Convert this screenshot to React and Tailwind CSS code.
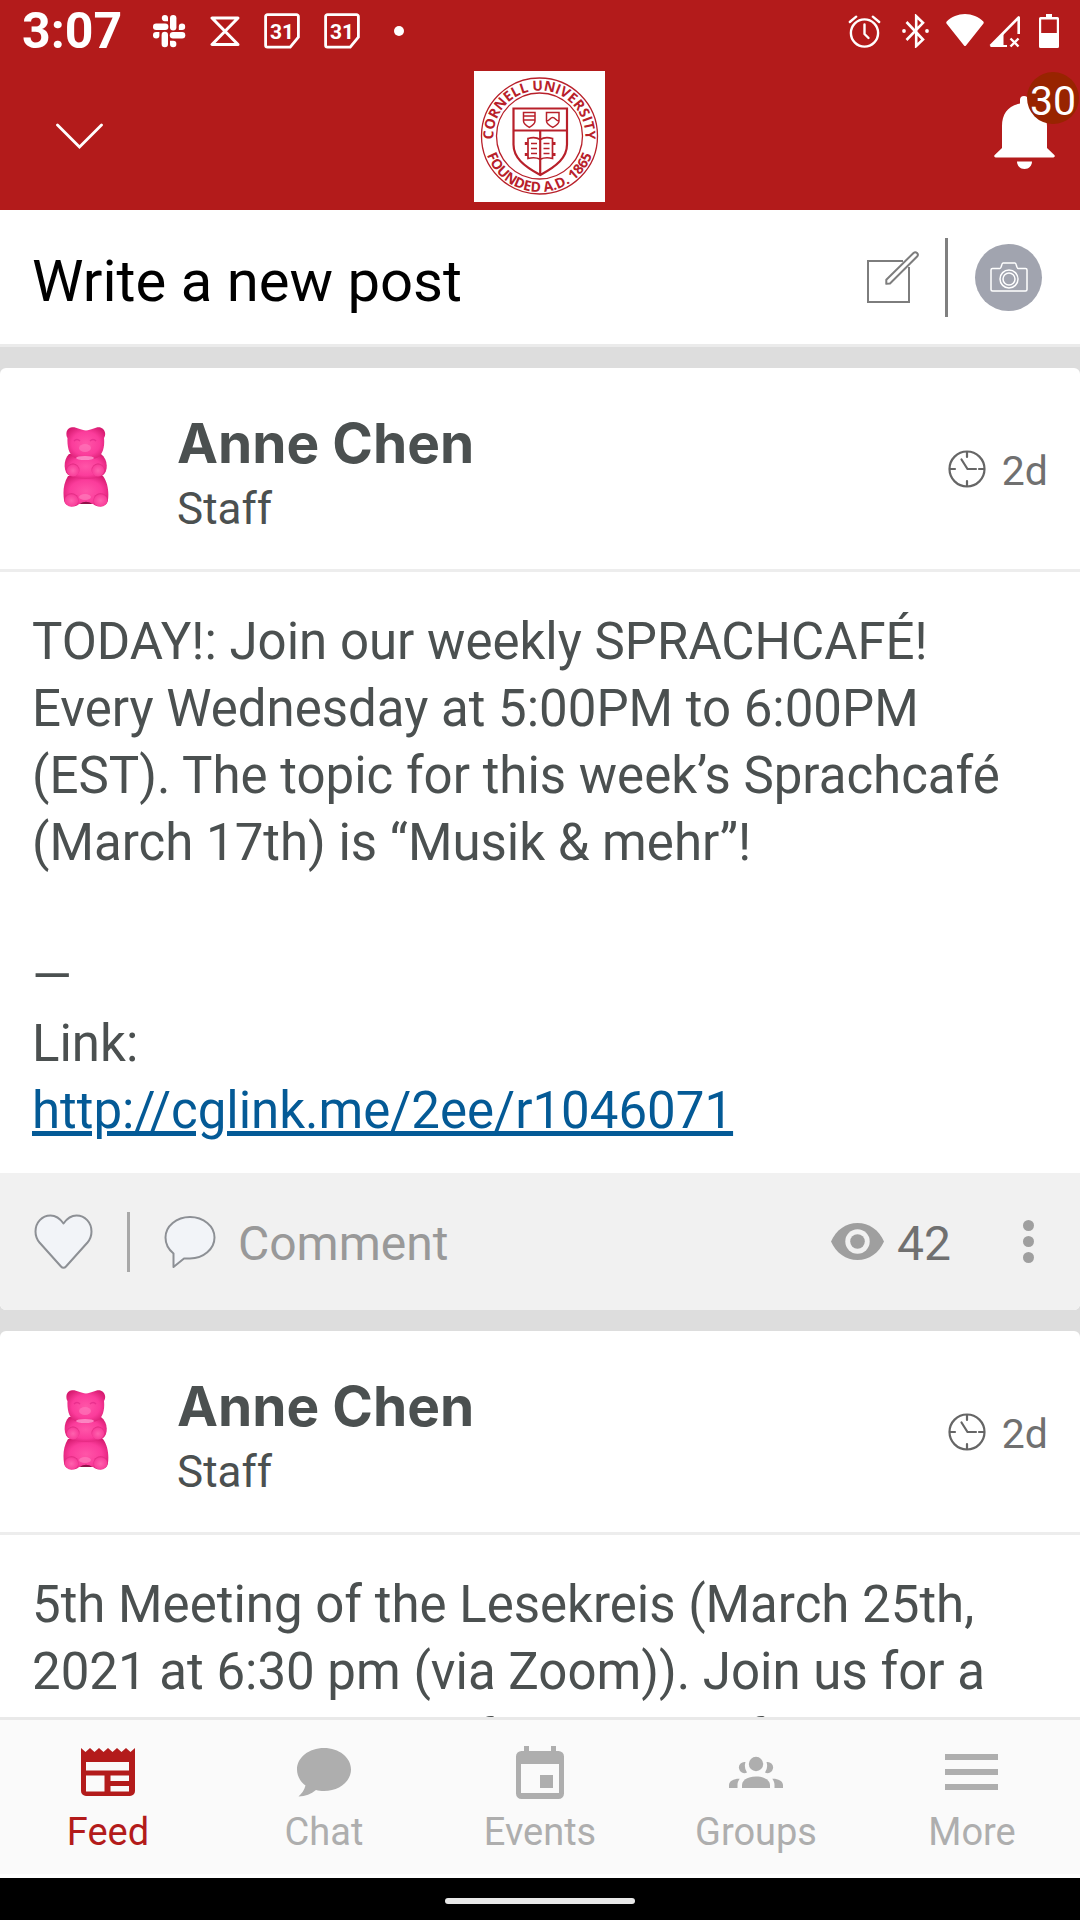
import React from "react";

function SlackIcon() {
  return (
    <svg className="h-[34px] w-[34px]" viewBox="0 0 34 34" fill="#fff" aria-hidden="true">
      <rect x="18" y="1" width="6.4" height="15.5" rx="3.2" />
      <rect x="1" y="9.6" width="15.4" height="6.4" rx="3.2" />
      <rect x="9.6" y="17.8" width="6.4" height="15.5" rx="3.2" />
      <rect x="17.8" y="18" width="15.5" height="6.4" rx="3.2" />
      <path d="M16 7.2h-3.2A3.1 3.1 0 1 1 16 4.1Z" />
      <path d="M26.8 16v-3.2a3.2 3.2 0 1 1 3.2 3.2Z" />
      <path d="M7.4 18v3.2a3.2 3.2 0 1 1-3.2-3.2Z" />
      <path d="M18 26.8h3.2a3.2 3.2 0 1 1-3.2 3.2Z" />
    </svg>
  );
}

function HourglassIcon() {
  return (
    <svg className="h-[34px] w-[30px]" viewBox="0 0 30 34" fill="none" stroke="#fff" strokeWidth="3" strokeLinejoin="round" aria-hidden="true">
      <path d="M2 4h26L2 30.5h26Z" />
    </svg>
  );
}

function CalendarDayIcon() {
  return (
    <svg className="h-[36px] w-[36px]" viewBox="0 0 36 36" fill="none" aria-hidden="true">
      <path d="M3.5 1.7h29a1.9 1.9 0 0 1 1.9 1.9v20.6L26.2 34.2H3.5a1.9 1.9 0 0 1-1.9-1.9V3.6a1.9 1.9 0 0 1 1.9-1.9Z" stroke="#fff" strokeWidth="2.8" strokeLinejoin="round" />
      <text x="18" y="25.5" textAnchor="middle" fill="#fff" fontFamily="Roboto, sans-serif" fontWeight="700" fontSize="21">31</text>
    </svg>
  );
}

function AlarmIcon() {
  return (
    <svg className="h-[34px] w-[33px]" viewBox="0 0 33 34" fill="none" stroke="#fff" strokeWidth="2.4" strokeLinecap="round" strokeLinejoin="round" aria-hidden="true">
      <circle cx="16.5" cy="19" r="13.6" />
      <path d="M16.5 10.5V20l4 4M1.8 8l6.4-5.3M31.2 8l-6.4-5.3" />
    </svg>
  );
}

function BluetoothIcon() {
  return (
    <svg className="h-[34px] w-[27px]" viewBox="0 0 27 34" fill="none" stroke="#fff" strokeWidth="2.6" aria-hidden="true">
      <path d="M4.5 8 21 25.5 14.2 32V2.2L21 8.8 4.5 26" />
      <circle cx="2" cy="17" r="1.9" fill="#fff" stroke="none" />
      <circle cx="25" cy="17" r="1.9" fill="#fff" stroke="none" />
    </svg>
  );
}

function WifiIcon() {
  return (
    <svg className="h-[34px] w-[38px]" viewBox="0 0 38 34" fill="#fff" aria-hidden="true">
      <path d="M19 0c7 0 13.500 2.800 18.300 7.500.6.700.6 1.600 0 2.300L20 31.500c-.6.7-1.400.7-2 0L.7 9.800c-.6-.7-.6-1.600 0-2.300C5.500 2.800 12 0 19 0Z" />
    </svg>
  );
}

function SignalIcon() {
  return (
    <svg className="h-[34px] w-[32px]" viewBox="0 0 32 34" aria-hidden="true">
      <path d="M1.5 32 29.700 3.500V20" fill="none" stroke="#fff" strokeWidth="2.6" strokeLinejoin="round" />
      <path d="M1 33 14.500 19V31H18v2Z" fill="#fff" />
      <path d="m21.500 24.500 8 8m0-8-8 8" stroke="#fff" strokeWidth="2.4" fill="none" />
    </svg>
  );
}

function BatteryIcon() {
  return (
    <svg className="h-[35px] w-[20px]" viewBox="0 0 20 35" aria-hidden="true">
      <path d="M7 0h6v3h5.500A1.500 1.500 0 0 1 20 4.500v28a1.500 1.500 0 0 1-1.500 1.500h-17A1.500 1.500 0 0 1 0 32.500v-28A1.500 1.500 0 0 1 1.500 3H7Zm-4.800 5.500V19h15.600V5.500Z" fill="#fff" fillRule="evenodd" />
    </svg>
  );
}

function StatusBar() {
  return (
    <div className="flex h-[62px] shrink-0 items-center justify-between pl-[22px] pr-[21px]">
      <div className="flex items-center gap-[24px]">
        <time className="mr-[6px] text-[50px] leading-[62px] font-bold text-white">3:07</time>
        <SlackIcon />
        <HourglassIcon />
        <CalendarDayIcon />
        <CalendarDayIcon />
        <span className="ml-[10px] size-[10px] rounded-full bg-white" />
      </div>
      <div className="flex items-center">
        <AlarmIcon />
        <span className="w-[21px]" />
        <BluetoothIcon />
        <span className="w-[17px]" />
        <WifiIcon />
        <span className="w-[5px]" />
        <SignalIcon />
        <span className="w-[18px]" />
        <BatteryIcon />
      </div>
    </div>
  );
}

function CornellSeal() {
  return (
    <svg className="size-[131px] bg-white" viewBox="0 0 131 131" fill="none" stroke="#b8202a" role="img" aria-label="Cornell University">
      <defs>
        <path id="seal-top" d="M20.5 75A46 46 0 1 1 110.5 75" />
        <path id="seal-bottom" d="M9.500 65A56 56 0 0 0 121.500 65" />
      </defs>
      <circle cx="65.5" cy="65" r="58" strokeWidth="1.3" />
      <circle cx="65.5" cy="65" r="43" strokeWidth="1.3" />
      <g fill="#b8202a" stroke="none" fontFamily="'Open Sans', sans-serif" fontWeight="700" fontSize="14" textAnchor="middle">
        <text><textPath href="#seal-top" startOffset="50%">CORNELL UNIVERSITY</textPath></text>
        <text><textPath href="#seal-bottom" startOffset="50%">FOUNDED A.D. 1865</textPath></text>
      </g>
      <path d="M39.5 37.5h53.5v36c0 13-10 21.500-26.700 30.500C49.500 95 39.500 86.500 39.500 73.500ZM39.500 59.500H93M66.200 59.500V104" strokeWidth="2.2" />
      <path d="M49.500 41.500h11.500v8.500c0 3-2.500 4.600-5.700 6.300-3.300-1.700-5.800-3.300-5.800-6.300ZM49.500 45h11.500M49.500 49h11.500" strokeWidth="1.500" />
      <path d="M72.500 41.500h12.500v8.500c0 3-2.800 4.600-6.200 6.300-3.500-1.700-6.300-3.300-6.300-6.300ZM72.500 50c3 0 3.500-3.500 6.200-3.500S82 50 85 50" strokeWidth="1.500" />
      <path d="M54 67.500c5-1.500 9-1 12.200 1 3.200-2 7.300-2.500 12.300-1v20c-5-1.300-9-.8-12.300.8-3.200-1.600-7.200-2.100-12.200-.8Z" strokeWidth="1.700" />
      <path d="M57 72.500h6M57 77.500h6M57 82.500h6M69.500 72.500h6M69.500 77.500h6M69.500 82.500h6" strokeWidth="1.600" />
      <path d="M50.800 72.500h3M50.800 83.500h3M78.500 72.500h3M78.500 83.500h3" strokeWidth="2.800" />
    </svg>
  );
}

function AppHeader() {
  return (
    <header className="shrink-0 bg-[#b31b1b]">
      <StatusBar />
      <div className="grid h-[148px] grid-cols-[1fr_auto_1fr] items-center pl-[56px] pr-[25px]">
        <button type="button" aria-label="Collapse" className="justify-self-start">
          <svg className="h-[26px] w-[48px]" viewBox="0 0 48 26" fill="none" stroke="#fff" strokeWidth="2.8" strokeLinecap="round" aria-hidden="true">
            <path d="M1.500 2 23.500 24 45.500 2" />
          </svg>
        </button>
        <div className="-ml-8">
          <CornellSeal />
        </div>
        <button type="button" aria-label="30 notifications" className="relative justify-self-end pb-2">
          <svg className="h-[73px] w-[61px]" viewBox="0 0 61 73" fill="#fff" aria-hidden="true">
            <path d="M26 4a4 4 0 0 1 8 0v3.500C46 9.500 53 18 53 30v22l7.300 7c1 1 .4 2.500-1 2.500H1.700c-1.400 0-2-1.500-1-2.500L8 52V30C8 18 14 9.500 26 7.500Z" />
            <path d="M23 65.500h15c0 4-3 7.500-7.500 7.500S23 69.500 23 65.500Z" />
          </svg>
          <span className="absolute -top-[24px] -right-[24px] flex size-[52px] items-center justify-center rounded-full bg-[#982400] pt-2 text-[41px] leading-none text-white">
            30
          </span>
        </button>
      </div>
    </header>
  );
}

function Composer() {
  return (
    <section className="flex h-[137px] items-center border-b-[3px] border-[#ebebeb] bg-white pl-[32px] pr-[38px]">
      <button type="button" className="flex-1 pt-2 text-left text-[58px] leading-[68px] text-black">Write a new post</button>
      <button type="button" aria-label="Compose">
        <svg className="h-[52px] w-[54px]" viewBox="0 0 54 52" fill="none" stroke="#7d7d7d" strokeWidth="2" aria-hidden="true">
          <path d="M37 10H2v41h41V16" />
          <path d="M20.300 32.800v-4L47.500 2c2.400-2.100 5.800 1 3.600 3.500L24 32.500Z" strokeLinejoin="round" fill="#fff" />
        </svg>
      </button>
      <span className="mr-[27px] ml-[25px] h-[79px] w-[3px] bg-[#808080]" />
      <button type="button" aria-label="Add photo" className="flex size-[67px] items-center justify-center rounded-full bg-[#a1a4af]">
        <svg className="h-[30px] w-[38px]" viewBox="0 0 38 30" fill="none" stroke="#fff" strokeWidth="1.500" strokeLinejoin="round" aria-hidden="true">
          <path d="M2.500 6.500H10c1.500 0 1.500-5.500 3-5.500h12c1.500 0 1.500 5.500 3 5.500h7.500c.8 0 1.500.7 1.500 1.500v19.500c0 .8-.7 1.500-1.500 1.500h-33c-.8 0-1.500-.7-1.500-1.500V8c0-.8.7-1.500 1.500-1.500Z" />
          <circle cx="19" cy="17" r="9" />
          <circle cx="19" cy="17" r="6" />
        </svg>
      </button>
    </section>
  );
}

function GummyBear({ id }) {
  const body = `bear-body-${id}`;
  const limb = `bear-limb-${id}`;
  return (
    <svg className="h-[80px] w-[46px]" viewBox="0 0 46 80" role="img" aria-label="Anne Chen">
      <defs>
        <radialGradient id={body} cx="50%" cy="50%" r="60%">
          <stop offset="0" stopColor="#ff55a8" />
          <stop offset="0.6" stopColor="#fb3c9b" />
          <stop offset="1" stopColor="#d61a6f" />
        </radialGradient>
        <radialGradient id={limb} cx="50%" cy="55%" r="60%">
          <stop offset="0" stopColor="#ff62ae" />
          <stop offset="0.7" stopColor="#f9409b" />
          <stop offset="1" stopColor="#cf1a6e" />
        </radialGradient>
      </defs>
      <path d="M5 49C0 57 0 66 1 73c1 7 12 8 15 4h14c4 4 14 3 15-4 1-8 0-17-5-24Z" fill={`url(#${body})`} />
      <path d="M6 27c-6 6-6 19 1 22 10 4 22 4 32 0 7-4 6-17-1-22Z" fill={`url(#${body})`} />
      <path d="M23 3.500C17 3 13-.5 8 .5 3 1.500 2.500 8 4.500 11 4 20 6 30 14 31.500c6 1.500 12 1.500 18 0C39.500 30 42 20 41 11c2.500-4 1-9-3.500-10.500C33-.5 29 3 23 3.500Z" fill={`url(#${body})`} />
      <ellipse cx="10" cy="43" rx="6.500" ry="6.500" fill={`url(#${limb})`} />
      <ellipse cx="35" cy="43" rx="6.500" ry="6.500" fill={`url(#${limb})`} />
      <ellipse cx="8.500" cy="73" rx="7.200" ry="6.800" fill={`url(#${limb})`} />
      <ellipse cx="37.500" cy="73" rx="7.200" ry="6.800" fill={`url(#${limb})`} />
      <path d="M17 77c3-3 9-3 12 0Z" fill="#8f1248" />
      <ellipse cx="22" cy="70" rx="6" ry="3" fill="#ff86c0" opacity="0.6" />
      <ellipse cx="22" cy="31" rx="9" ry="2" fill="#ff9bcf" opacity="0.8" />
      <path d="M11 14c2-2 4-2 6 0M27 14c2-2 4-2 6 0" stroke="#d81b7e" strokeWidth="1.400" fill="none" opacity="0.5" />
      <ellipse cx="22" cy="21" rx="6" ry="4" fill="#ff7dbe" opacity="0.6" />
    </svg>
  );
}

function PostHeader({ id, name, role, age }) {
  return (
    <header className="flex h-[204px] items-center border-b-[3px] border-[#ededed] pl-[33px] pr-[32px]">
      <div className="flex w-[144px] pb-1 pl-[30px]">
        <GummyBear id={id} />
      </div>
      <div className="flex-1 pt-[14px] text-[#4b5050]">
        <h2 className="font-['Inter',sans-serif] text-[55px] leading-[66px] font-bold">{name}</h2>
        <p className="text-[44px] leading-[66px]">{role}</p>
      </div>
      <svg className="mr-[16px] size-[38px]" viewBox="0 0 38 38" fill="none" stroke="#666" strokeWidth="2.200" aria-hidden="true">
        <circle cx="19" cy="19" r="17.500" />
        <path d="M19 2v5M19 31v5M2 19h5M31 19h5M13.500 9.500 19.500 19H28" strokeLinecap="round" />
      </svg>
      <time className="pt-1 text-[41px] leading-[50px] text-[#707070]">{age}</time>
    </header>
  );
}

function PostActions({ views }) {
  return (
    <footer className="flex h-[137px] items-center bg-[#f1f1f1] pl-[34px] pr-[41px]">
      <button type="button" aria-label="Like">
        <svg className="h-[56px] w-[59px]" viewBox="0 0 59 56" fill="#f2f4f8" stroke="#8d9095" strokeWidth="2" strokeLinejoin="round" aria-hidden="true">
          <path d="M29.500 9.500C26 4.500 22 1.500 16.500 1.500 8 1.500 1.500 8.500 1.500 17.500c0 4 1.500 8 4 11l21.500 24c1.500 1.700 3.500 1.700 5 0l21.500-24c2.500-3 4-7 4-11 0-9-6.500-16-15-16-5.500 0-9.500 3-13 8Z" />
        </svg>
      </button>
      <span className="mr-[34px] ml-[34px] h-[60px] w-[3px] bg-[#a8a8a8]" />
      <button type="button" className="flex items-center gap-[22px] text-[48px] leading-[60px] text-[#999]">
        <svg className="h-[54px] w-[52px]" viewBox="0 0 52 54" fill="#f2f4f8" stroke="#8d9095" strokeWidth="2" strokeLinejoin="round" aria-hidden="true">
          <path d="M26 2C39.500 2 50.500 11 50.500 22.500S39.500 43.500 26 43.500h-6L9.500 52V38.500C4 34 1.500 28.500 1.500 22.500 1.500 11 12.500 2 26 2Z" />
        </svg>
        <span className="pt-1">Comment</span>
      </button>
      <svg className="ml-auto h-[37px] w-[53px]" viewBox="0 0 53 37" aria-hidden="true">
        <path d="M26.500 0C38 0 48 7 53 18.500 48 30 38 37 26.500 37S5 30 0 18.500C5 7 15 0 26.500 0Z" fill="#9f9f9f" />
        <circle cx="26.500" cy="18.500" r="12.200" fill="#f1f1f1" />
        <circle cx="26.500" cy="18.500" r="7.300" fill="#9f9f9f" />
      </svg>
      <span className="ml-[13px] pt-1 text-[48px] leading-[60px] text-[#707070]">{views}</span>
      <button type="button" aria-label="More options" className="ml-[66px] flex w-[22px] flex-col items-center gap-[5px]">
        <span className="size-[11px] rounded-full bg-[#9f9f9f]" />
        <span className="size-[11px] rounded-full bg-[#9f9f9f]" />
        <span className="size-[11px] rounded-full bg-[#9f9f9f]" />
      </button>
    </footer>
  );
}

function Post({ id, name, role, age, views, children }) {
  return (
    <article className="mt-[21px] overflow-hidden rounded-md bg-white">
      <PostHeader id={id} name={name} role={role} age={age} />
      <div className="px-[32px] pt-[36px] pb-[29px] text-[51px] leading-[67px] text-[#4b5050]">{children}</div>
      <PostActions views={views} />
    </article>
  );
}

function FeedIcon() {
  return (
    <svg className="h-[54px] w-[54px]" viewBox="0 0 54 54" fill="currentColor" aria-hidden="true">
      <path fillRule="evenodd" d="M0 2l4.500 4L9 2l4.500 4L18 2l4.500 4L27 2l4.500 4L36 2l4.500 4L45 2l4.500 4L54 2v43a5 5 0 0 1-5 5H5a5 5 0 0 1-5-5ZM5 16v8.500h43V16ZM5 29.500v16h18.500v-16ZM29.500 29.500v5.500H48v-5.500ZM29.500 40v5.500H48V40Z" />
    </svg>
  );
}

function ChatIcon() {
  return (
    <svg className="h-[54px] w-[54px]" viewBox="0 0 54 54" fill="currentColor" aria-hidden="true">
      <path d="M27 2c15 0 27 9.500 27 21.500S42 45 27 45c-3 0-5.500-.3-8-1-5 4-10.500 6.200-17.500 6.500 3.500-3 6-7 7-11C3.500 36 0 30 0 23.500 0 11.500 12 2 27 2Z" />
    </svg>
  );
}

function EventsIcon() {
  return (
    <svg className="h-[54px] w-[54px]" viewBox="0 0 54 54" fill="currentColor" aria-hidden="true">
      <path fillRule="evenodd" d="M11 0h5v5h22V0h5v5h2.500a5.500 5.500 0 0 1 5.500 5.500v37a5.500 5.500 0 0 1-5.500 5.500h-37A5.500 5.500 0 0 1 3 47.500v-37A5.500 5.500 0 0 1 8.500 5H11ZM8 18v29h38V18ZM27 29h13v13H27Z" />
    </svg>
  );
}

function GroupsIcon() {
  return (
    <svg className="h-[54px] w-[54px]" viewBox="0 0 54 54" fill="currentColor" aria-hidden="true">
      <circle cx="27" cy="18" r="7.200" />
      <path d="M13 42v-3c0-5 6-8.500 14-8.500s14 3.500 14 8.500v3Z" />
      <path d="M16.500 16a5.600 5.600 0 1 0 1.500 10.500A12 12 0 0 1 16.500 16ZM37.500 16a5.600 5.600 0 1 1-1.500 10.500A12 12 0 0 0 37.500 16Z" />
      <path d="M8.500 42v-3c0-2.500.8-4.500 2.200-6.300C5 32.500 0 35 0 39v3ZM45.500 42v-3c0-2.500-.8-4.500-2.200-6.300C49 32.500 54 35 54 39v3Z" />
    </svg>
  );
}

function MenuIcon() {
  return (
    <svg className="h-[54px] w-[54px]" viewBox="0 0 54 54" fill="currentColor" aria-hidden="true">
      <path d="M0 8h53v6H0ZM0 23h53v6H0ZM0 38h53v6H0Z" />
    </svg>
  );
}

const TABS = [
  { label: "Feed", Icon: FeedIcon, active: true },
  { label: "Chat", Icon: ChatIcon },
  { label: "Events", Icon: EventsIcon },
  { label: "Groups", Icon: GroupsIcon },
  { label: "More", Icon: MenuIcon },
];

function TabBar() {
  return (
    <nav className="grid shrink-0 grid-cols-5 border-t-[3px] border-b-4 border-t-[#e9e9e9] border-b-white bg-[#fafafa] pt-[26px] pb-[19px]">
      {TABS.map(({ label, Icon, active }) => (
        <button
          key={label}
          type="button"
          aria-current={active ? "page" : undefined}
          className={`flex flex-col items-center gap-[10px] text-[38px] leading-[45px] ${active ? "text-[#b31b1b]" : "text-[#aeaeae]"}`}
        >
          <Icon />
          {label}
        </button>
      ))}
    </nav>
  );
}

export default function App() {
  return (
    <div className="flex h-screen flex-col overflow-hidden bg-[#ddd] font-['Roboto',sans-serif]">
      <AppHeader />
      <main className="min-h-0 flex-1 overflow-hidden">
        <Composer />
        <Post id="sprachcafe" name="Anne Chen" role="Staff" age="2d" views={42}>
          <p>
            TODAY!: Join our weekly SPRACHCAFÉ! Every Wednesday at 5:00PM to 6:00PM (EST). The topic for this week’s
            Sprachcafé (March 17th) is “Musik &amp; mehr”!
          </p>
          <p className="mt-[67px]">—</p>
          <p>Link:</p>
          <a href="http://cglink.me/2ee/r1046071" className="text-[#045a96] underline">http://cglink.me/2ee/r1046071</a>
        </Post>
        <Post id="lesekreis" name="Anne Chen" role="Staff" age="2d" views={42}>
          <p>
            5th Meeting of the Lesekreis (March 25th, 2021 at 6:30 pm (via Zoom)). Join us for a brainstorming hour for
            lectures for a lesson
          </p>
        </Post>
      </main>
      <TabBar />
      <div className="flex h-[42px] shrink-0 items-center justify-center bg-black pt-1">
        <span className="h-[6px] w-[190px] rounded-full bg-[#e8e8e8]" />
      </div>
    </div>
  );
}
